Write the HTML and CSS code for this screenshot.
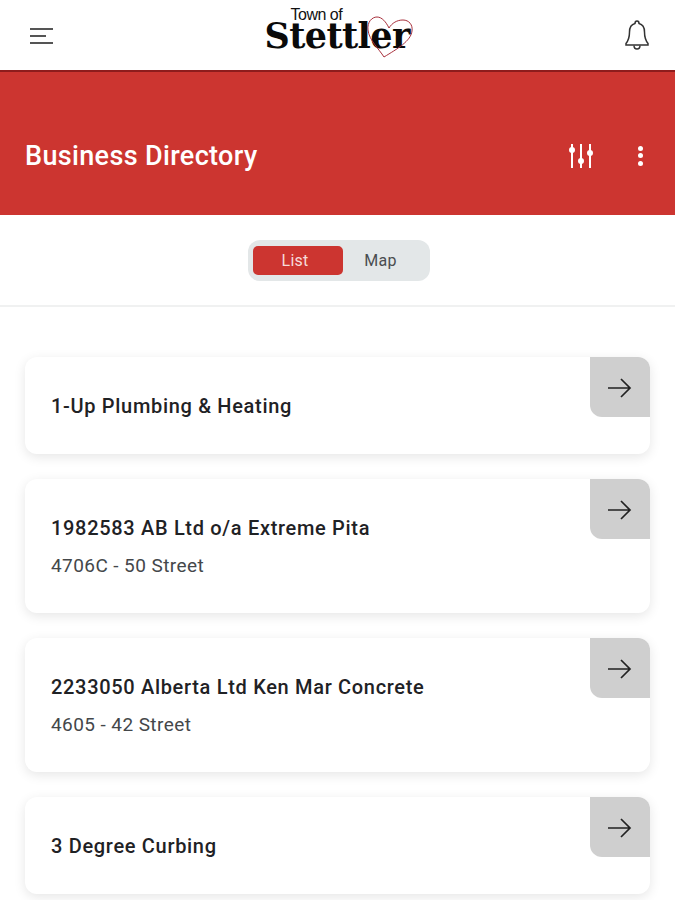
FILE: index.html
```html
<!DOCTYPE html>
<html>
<head>
    <meta charset="UTF-8">
    <meta name="viewport" content="width=device-width, initial-scale=1.0">
    <title>Business Directory</title>
    <link rel="stylesheet" href="styles.css">
</head>
<body>
<header class="topbar">
    <svg class="menu-icon" width="26" height="20" viewBox="0 0 26 20" fill="none" stroke="#555" stroke-width="2.200">
        <path d="M2 3H25M2 10H18M2 17H25"/>
    </svg>
    <div class="logo">
        <span class="logo-town">Town of</span>
        <span class="logo-name">Stettler</span>
        <svg class="logo-heart" width="47" height="42" viewBox="0 0 47 42" fill="none" stroke="#a8303c" stroke-width="1">
            <path d="M17 41C12 33 2 24 1 14C0 6 5 1 10 1C15 1 19 6 22 12C25 7 30 4 36 4C42 4 46 9 45 15C44 25 30 33 17 41Z"/>
        </svg>
    </div>
    <svg class="bell-icon" width="28" height="32" viewBox="0 0 28 32" fill="none" stroke="#333" stroke-width="1.500">
        <path d="M14 2C15.500 2 16 3 16 4.500C20 5.500 21.500 9 21.500 13C21.500 19 23 22 25 24.500V26H3V24.500C5 22 6.500 19 6.500 13C6.500 9 8 5.500 12 4.500C12 3 12.500 2 14 2Z"/>
        <path d="M11 26.500C11 29 12.500 30 14 30C15.500 30 17 29 17 26.500"/>
    </svg>
</header>

<section class="banner">
    <h1>Business Directory</h1>
    <div class="banner-actions">
        <svg width="26" height="26" viewBox="0 0 26 26" fill="#fff" stroke="#fff" stroke-width="2">
            <path d="M4 1V25M13 1V25M22 1V25" fill="none"/>
            <circle cx="4" cy="7" r="2"/>
            <circle cx="13" cy="18" r="2"/>
            <circle cx="22" cy="10" r="2"/>
        </svg>
        <div class="dots"><span></span><span></span><span></span></div>
    </div>
</section>

<div class="switch-row">
    <div class="switch">
        <span class="switch-item active">List</span>
        <span class="switch-item">Map</span>
    </div>
</div>

<main class="cards">
    <div class="card">
        <h3>1-Up Plumbing &amp; Heating</h3>
        <div class="card-arrow">
            <svg width="24" height="20" viewBox="0 0 24 20" fill="none" stroke="#222" stroke-width="1.700"><path d="M0 10H22M13 1L22 10L13 19"/></svg>
        </div>
    </div>
    <div class="card card-tall">
        <h3>1982583 AB Ltd o/a Extreme Pita</h3>
        <p>4706C - 50 Street</p>
        <div class="card-arrow">
            <svg width="24" height="20" viewBox="0 0 24 20" fill="none" stroke="#222" stroke-width="1.700"><path d="M0 10H22M13 1L22 10L13 19"/></svg>
        </div>
    </div>
    <div class="card card-tall">
        <h3>2233050 Alberta Ltd Ken Mar Concrete</h3>
        <p>4605 - 42 Street</p>
        <div class="card-arrow">
            <svg width="24" height="20" viewBox="0 0 24 20" fill="none" stroke="#222" stroke-width="1.700"><path d="M0 10H22M13 1L22 10L13 19"/></svg>
        </div>
    </div>
    <div class="card">
        <h3>3 Degree Curbing</h3>
        <div class="card-arrow">
            <svg width="24" height="20" viewBox="0 0 24 20" fill="none" stroke="#222" stroke-width="1.700"><path d="M0 10H22M13 1L22 10L13 19"/></svg>
        </div>
    </div>
</main>
</body>
</html>
```

FILE: styles.css
```css
* {
    box-sizing: border-box;
}

html, body {
    height: 900px;
    overflow: hidden;
}

body {
    margin: 0;
    font-family: Roboto, "Liberation Sans", sans-serif;
    background-color: #fff;
    color: #1f2225;
}

.topbar {
    height: 72px;
    padding: 0 24px 0 28px;
    display: flex;
    align-items: center;
    justify-content: space-between;
    border-bottom: 2px solid #8e1c1c;
}

.menu-icon {
    margin-top: 1px;
}

.logo {
    position: relative;
    width: 148px;
    height: 60px;
}

.logo-town {
    display: block;
    font-family: "Liberation Sans", sans-serif;
    font-size: 16px;
    line-height: 14px;
    letter-spacing: -0.5px;
    color: #111;
    padding: 3px 0 0 26px;
}

.logo-name {
    display: block;
    font-family: "DejaVu Serif", serif;
    font-weight: bold;
    font-size: 35px;
    line-height: 28px;
    letter-spacing: -0.6px;
    color: #0a0a0a;
}

.logo-heart {
    position: absolute;
    left: 102px;
    top: 11px;
}

.banner {
    height: 143px;
    padding: 24px 25px 0;
    display: flex;
    align-items: center;
    justify-content: space-between;
    background-color: #cc3530;
}

.banner h1 {
    margin: 0;
    font-size: 27px;
    font-weight: 500;
    letter-spacing: 0.35px;
    color: #fff;
}

.banner-actions {
    display: flex;
    align-items: center;
    gap: 44px;
    padding-right: 7px;
}

.dots {
    display: flex;
    flex-direction: column;
    gap: 2.500px;
}

.dots span {
    width: 5px;
    height: 5px;
    border-radius: 50%;
    background-color: #fff;
}

.switch-row {
    height: 92px;
    padding-top: 25px;
    display: flex;
    justify-content: center;
    align-items: flex-start;
    border-bottom: 2px solid #f0f1f1;
}

.switch {
    width: 182px;
    height: 41px;
    margin-left: 2px;
    padding: 6px 5px;
    display: flex;
    background-color: #e3e7e8;
    border-radius: 12px;
}

.switch-item {
    flex: 1;
    padding-right: 6px;
    display: flex;
    align-items: center;
    justify-content: center;
    font-size: 16px;
    letter-spacing: 0.2px;
    color: #4a4d50;
}

.switch-item.active {
    flex: none;
    width: 90px;
    padding-right: 5px;
    background-color: #cc3530;
    color: #f6dcdb;
    border-radius: 5px;
}

.cards {
    padding: 50px 25px 0;
    display: flex;
    flex-direction: column;
    gap: 25px;
}

.card {
    position: relative;
    flex: none;
    height: 97px;
    padding-left: 26px;
    display: flex;
    flex-direction: column;
    justify-content: center;
    background-color: #fff;
    border-radius: 12px;
    box-shadow: 0 3px 12px rgba(0, 0, 0, 0.1);
}

.card-tall {
    height: 134px;
}

.card h3 {
    margin: 0;
    font-size: 20px;
    font-weight: 500;
    letter-spacing: 0.68px;
    color: #1f2225;
}

.card p {
    margin: 14px 0 0;
    font-size: 19px;
    letter-spacing: 0.42px;
    color: #44474a;
}

.card-arrow {
    position: absolute;
    top: 0;
    right: 0;
    width: 60px;
    height: 60px;
    padding-top: 2px;
    display: flex;
    align-items: center;
    justify-content: center;
    background-color: #cfcfcf;
    border-radius: 0 12px 0 12px;
}
```
